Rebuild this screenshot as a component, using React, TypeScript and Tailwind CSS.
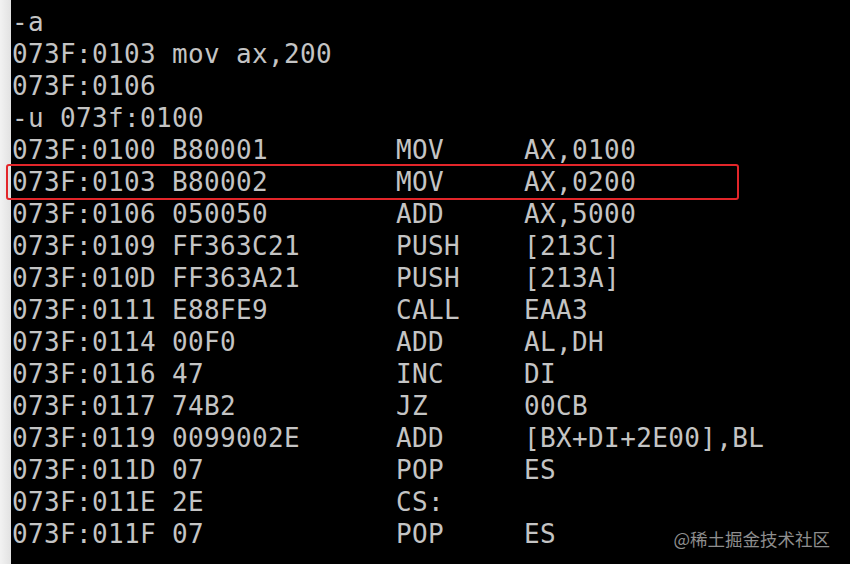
import React from 'react';

type Row = [string, string, string, string];

const rows: Row[] = [
  ['073F:0100', 'B80001', 'MOV', 'AX,0100'],
  ['073F:0103', 'B80002', 'MOV', 'AX,0200'],
  ['073F:0106', '050050', 'ADD', 'AX,5000'],
  ['073F:0109', 'FF363C21', 'PUSH', '[213C]'],
  ['073F:010D', 'FF363A21', 'PUSH', '[213A]'],
  ['073F:0111', 'E88FE9', 'CALL', 'EAA3'],
  ['073F:0114', '00F0', 'ADD', 'AL,DH'],
  ['073F:0116', '47', 'INC', 'DI'],
  ['073F:0117', '74B2', 'JZ', '00CB'],
  ['073F:0119', '0099002E', 'ADD', '[BX+DI+2E00],BL'],
  ['073F:011D', '07', 'POP', 'ES'],
  ['073F:011E', '2E', 'CS:', ''],
  ['073F:011F', '07', 'POP', 'ES'],
];

// debug prints columns at 0 / 10 / 24 / 32
const fmt = ([addr, bytes, op, arg]: Row) =>
  `${addr} ${bytes.padEnd(14)}${op.padEnd(8)}${arg}`;

const lines: string[] = [
  fmt(['073F:011F', '07', 'POP', 'ES']),
  '-a',
  '073F:0103 mov ax,200',
  '073F:0106',
  '-u 073f:0100',
  ...rows.map(fmt),
];

export default function App() {
  return (
    <div className="relative flex w-[850px] h-[564px] overflow-hidden bg-black">
      <div className="w-[11px] shrink-0 bg-gradient-to-r from-[#f2f2f2] to-[#e2e2e2]" />
      <div
        className="-mt-[26px] pl-px text-[26px] leading-[32px] tracking-[0.35px] text-[#c4c4c4] whitespace-pre"
        style={{ fontFamily: '"DejaVu Sans Mono", "Liberation Mono", monospace' }}
      >
        {lines.map((l, i) => (
          <div key={i} className="h-[32px]">
            {l}
          </div>
        ))}
      </div>

      {/* highlight box */}
      <div className="absolute left-[6px] top-[164px] w-[733px] h-[36px] rounded-[3px] border-2 border-[#e3262a]" />

      <div
        className="absolute right-[20px] bottom-[17px] text-[17.5px] leading-none text-[#8e8e8e]"
        style={{ fontFamily: '"Noto Sans CJK SC", "Noto Sans", sans-serif' }}
      >
        @稀土掘金技术社区
      </div>
    </div>
  );
}
